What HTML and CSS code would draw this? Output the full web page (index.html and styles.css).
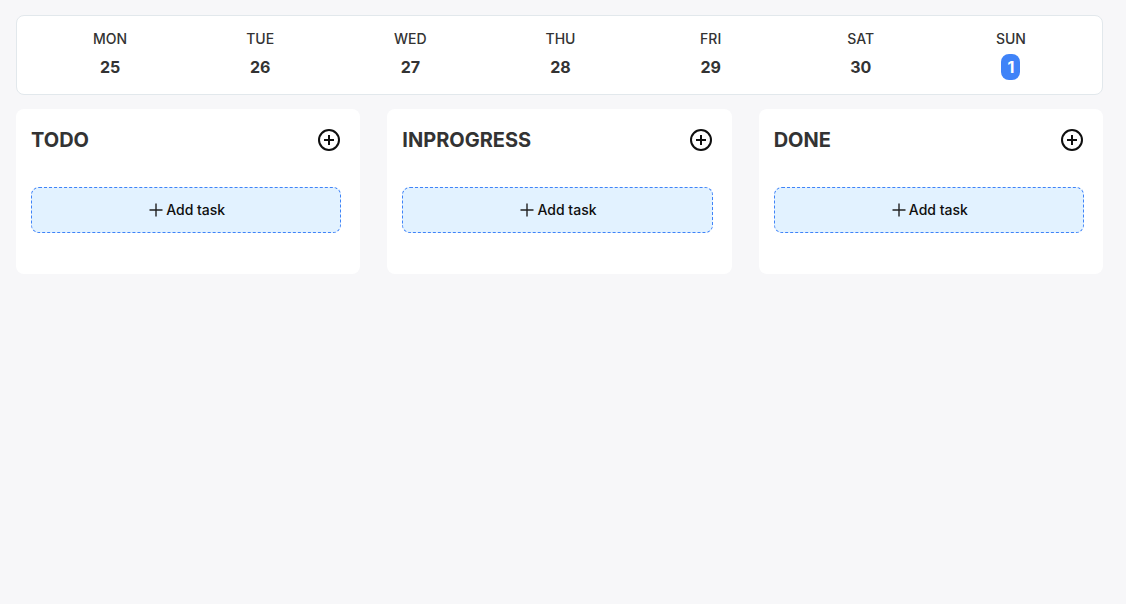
FILE: index.html
```html
<!DOCTYPE html>
<html lang="en">
<head>
<meta charset="utf-8">
<meta name="viewport" content="width=device-width, initial-scale=1">
<title>Task board</title>
<link rel="stylesheet" href="styles.css">
</head>
<body>
<main class="page">
  <ol class="week">
    <li class="day"><span class="day-name">MON</span><span class="day-number">25</span></li>
    <li class="day"><span class="day-name">TUE</span><span class="day-number">26</span></li>
    <li class="day"><span class="day-name">WED</span><span class="day-number">27</span></li>
    <li class="day"><span class="day-name">THU</span><span class="day-number">28</span></li>
    <li class="day"><span class="day-name">FRI</span><span class="day-number">29</span></li>
    <li class="day"><span class="day-name">SAT</span><span class="day-number">30</span></li>
    <li class="day"><span class="day-name">SUN</span><span class="day-number today">1</span></li>
  </ol>
  <div class="board">
    <section class="column">
      <header class="column-head">
        <h2 class="column-title">TODO</h2>
        <button class="icon-button" type="button" aria-label="Add to todo"><svg class="icon-circle" viewBox="0 0 24 24"><circle cx="12" cy="12" r="10"/><path d="M12 7v10M7 12h10"/></svg></button>
      </header>
      <button class="add-task" type="button"><svg class="icon-plus" viewBox="0 0 14 14"><path d="M7 0.5v13M0.5 7h13"/></svg>Add task</button>
    </section>
    <section class="column">
      <header class="column-head">
        <h2 class="column-title">INPROGRESS</h2>
        <button class="icon-button" type="button" aria-label="Add to in progress"><svg class="icon-circle" viewBox="0 0 24 24"><circle cx="12" cy="12" r="10"/><path d="M12 7v10M7 12h10"/></svg></button>
      </header>
      <button class="add-task" type="button"><svg class="icon-plus" viewBox="0 0 14 14"><path d="M7 0.5v13M0.5 7h13"/></svg>Add task</button>
    </section>
    <section class="column">
      <header class="column-head">
        <h2 class="column-title">DONE</h2>
        <button class="icon-button" type="button" aria-label="Add to done"><svg class="icon-circle" viewBox="0 0 24 24"><circle cx="12" cy="12" r="10"/><path d="M12 7v10M7 12h10"/></svg></button>
      </header>
      <button class="add-task" type="button"><svg class="icon-plus" viewBox="0 0 14 14"><path d="M7 0.5v13M0.5 7h13"/></svg>Add task</button>
    </section>
  </div>
</main>
</body>
</html>
```
FILE: styles.css
```css
* { box-sizing: border-box; }
body {
  margin: 0;
  background: #f7f7f9;
  color: #333;
  font-family: Inter, "Liberation Sans", sans-serif;
}
.page {
  display: flex;
  flex-direction: column;
  gap: 14px;
  padding: 15px 23px 15px 16px;
}
.week {
  display: grid;
  grid-template-columns: repeat(7, 1fr);
  margin: 0;
  padding: 12px 16px 14px 18px;
  list-style: none;
  background: #fff;
  border: 1px solid #e2e8ec;
  border-radius: 8px;
}
.day {
  display: flex;
  flex-direction: column;
  align-items: center;
  gap: 4px;
}
.day-name { font-size: 14px; line-height: 22px; font-weight: 500; }
.day-number { padding: 1px 6px; border-radius: 8px; font-size: 16px; line-height: 24px; font-weight: 700; }
.today { background: #3f83f8; color: #fff; }
.board { display: grid; grid-template-columns: repeat(3, 1fr); gap: 27px; }
.column {
  padding: 15px 19px 41px 15px;
  background: #fff;
  border-radius: 8px;
}
.column-head {
  display: flex;
  align-items: center;
  justify-content: space-between;
  height: 32px;
  margin-bottom: 31px;
}
.column-title { margin: 0; font-size: 20px; line-height: 28px; font-weight: 700; }
.icon-button { display: flex; padding: 0; border: 0; background: none; color: #0f0f0f; }
.icon-circle { width: 24px; height: 24px; fill: none; stroke: currentColor; stroke-width: 2; }
.add-task {
  display: flex;
  align-items: center;
  justify-content: center;
  gap: 3px;
  width: 100%;
  padding: 12px 12px 12px 14px;
  border: 1px dashed #3f83f8;
  border-radius: 8px;
  background: #e2f2ff;
  color: #0f0f0f;
  font: 500 14px/20px Inter, "Liberation Sans", sans-serif;
}
.icon-plus { width: 14px; height: 14px; fill: none; stroke: #222; stroke-width: 1.4; }
```
